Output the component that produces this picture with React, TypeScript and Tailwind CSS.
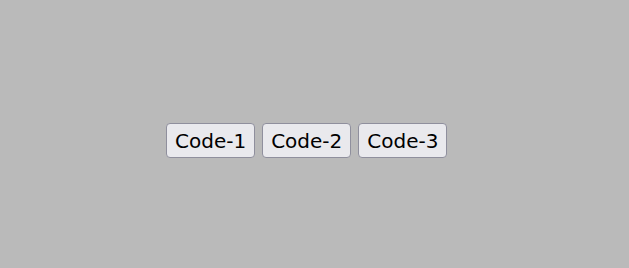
export default function App() {
  const labels = ['Code-1', 'Code-2', 'Code-3']
  return (
    <div className="h-[268px] w-full bg-[#bababa] flex items-start justify-start pl-[166px] pt-[123px]" style={{ fontFamily: '"DejaVu Sans", sans-serif' }}>
      <div className="flex gap-[7px]">
        {labels.map((l) => (
          <button
            key={l}
            className="h-[35px] px-[8px] bg-[#e9e9ed] border border-[#8f8f9d] rounded-[4px] text-[20px] text-black leading-none"
          >
            {l}
          </button>
        ))}
      </div>
    </div>
  )
}
